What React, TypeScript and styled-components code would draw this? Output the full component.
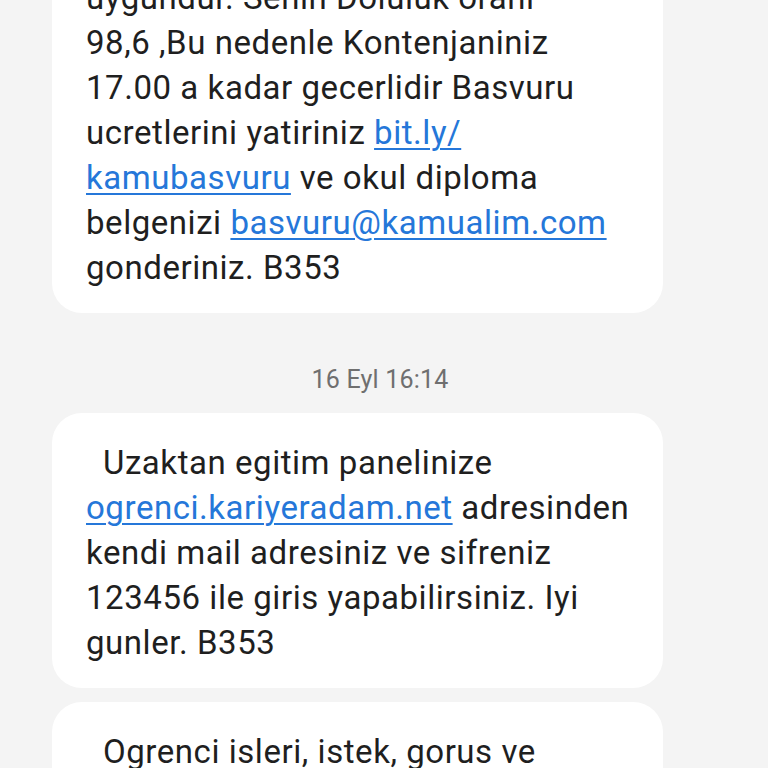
import React from "react";
import styled, { createGlobalStyle } from "styled-components";

const GlobalStyle = createGlobalStyle`
  html, body {
    margin: 0;
    padding: 0;
    background: #f4f4f4;
  }
  body {
    font-family: Roboto, "Noto Sans", "Liberation Sans", sans-serif;
  }
`;

const Screen = styled.div`
  width: 768px;
  height: 768px;
  overflow: hidden;
  background: #f4f4f4;
`;

const Thread = styled.div`
  display: flex;
  flex-direction: column;
  align-items: flex-start;
  padding: 0 105px 0 52px;
  margin-top: -52px;
`;

const Bubble = styled.div<{ $gapAfter?: number }>`
  width: 611px;
  box-sizing: border-box;
  background: #ffffff;
  border-radius: 30px;
  padding: 27px 20px 23px 34px;
  margin-bottom: ${(p) => p.$gapAfter ?? 0}px;
`;

const MessageText = styled.p<{ $indent?: number }>`
  margin: 0;
  font-size: 33px;
  line-height: 45px;
  color: #1f1f1f;
  text-indent: ${(p) => p.$indent ?? 0}px;
  letter-spacing: 0.55px;
  white-space: nowrap;
`;

const Link = styled.a`
  color: #2577d9;
  text-decoration: underline;
  text-decoration-thickness: 1.5px;
  text-underline-offset: 4px;
`;

const Timestamp = styled.div`
  align-self: stretch;
  margin: 51px -105px 17px -52px;
  padding-right: 8px;
  text-align: center;
  font-size: 25px;
  line-height: 32px;
  letter-spacing: 0.2px;
  color: #6f6f6f;
`;

export default function App() {
  return (
    <Screen>
      <GlobalStyle />
      <Thread>
        <Bubble>
          <MessageText>
            uygundur. Senin Doluluk orani
            <br />
            98,6 ,Bu nedenle Kontenjaniniz
            <br />
            17.00 a kadar gecerlidir Basvuru
            <br />
            ucretlerini yatiriniz <Link href="#">bit.ly/</Link>
            <br />
            <Link href="#">kamubasvuru</Link> ve okul diploma
            <br />
            belgenizi <Link href="#">basvuru@kamualim.com</Link>
            <br />
            gonderiniz. B353
          </MessageText>
        </Bubble>

        <Timestamp>16 Eyl 16:14</Timestamp>

        <Bubble $gapAfter={14}>
          <MessageText $indent={17}>
            Uzaktan egitim panelinize
            <br />
            <Link href="#">ogrenci.kariyeradam.net</Link> adresinden
            <br />
            kendi mail adresiniz ve sifreniz
            <br />
            123456 ile giris yapabilirsiniz. Iyi
            <br />
            gunler. B353
          </MessageText>
        </Bubble>

        <Bubble>
          <MessageText $indent={17}>
            Ogrenci isleri, istek, gorus ve
            <br />
            sikayetleriniz icin bize ulasiniz.
          </MessageText>
        </Bubble>
      </Thread>
    </Screen>
  );
}
